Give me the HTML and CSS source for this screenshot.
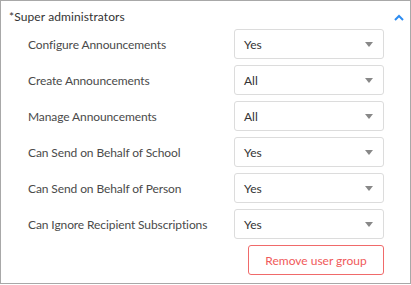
FILE: index.html
```html
<!DOCTYPE html>
<html lang="en">
<head>
    <meta charset="UTF-8">
    <title>Super administrators</title>
    <link rel="stylesheet" href="styles.css">
</head>
<body>
    <div class="panel">
        <div class="panel-header">
            <span>*Super administrators</span>
            <svg class="chevron" width="10" height="7" viewBox="0 0 10 7">
                <path d="M1 6 L5 2 L9 6" fill="none" stroke="#2d8cf0" stroke-width="2"/>
            </svg>
        </div>
        <div class="permissions">
            <label>Configure Announcements</label>
            <div class="select"><span>Yes</span><i class="caret"></i></div>

            <label>Create Announcements</label>
            <div class="select"><span>All</span><i class="caret"></i></div>

            <label>Manage Announcements</label>
            <div class="select"><span>All</span><i class="caret"></i></div>

            <label>Can Send on Behalf of School</label>
            <div class="select"><span>Yes</span><i class="caret"></i></div>

            <label>Can Send on Behalf of Person</label>
            <div class="select"><span>Yes</span><i class="caret"></i></div>

            <label>Can Ignore Recipient Subscriptions</label>
            <div class="select"><span>Yes</span><i class="caret"></i></div>
        </div>
        <div class="actions">
            <button class="remove">Remove user group</button>
        </div>
    </div>
</body>
</html>
```

FILE: styles.css
```css
body {
    margin: 0;
    font-family: Lato, "Liberation Sans", sans-serif;
    font-size: 12px;
    color: #333;
    background: #fff;
}
.panel {
    width: 411px;
    height: 284px;
    box-sizing: border-box;
    border: 1px solid #a8a8a8;
}
.panel-header {
    display: flex;
    justify-content: space-between;
    align-items: center;
    height: 28px;
    box-sizing: border-box;
    padding: 6px 6px 2px 8px;
    line-height: 18px;
    color: #333;
    letter-spacing: 0.1px;
}
.chevron {
    display: block;
}
.permissions {
    display: grid;
    grid-template-columns: 1fr 150px;
    row-gap: 6px;
    align-items: center;
    padding: 0 26px 0 27px;
}
.permissions label {
    color: #4a4a4a;
    letter-spacing: -0.1px;
}
.select {
    display: flex;
    align-items: center;
    justify-content: space-between;
    height: 30px;
    box-sizing: border-box;
    padding: 0 10px 0 9px;
    border: 1px solid #dcdcdc;
    border-radius: 3px;
    color: #333;
}
.caret {
    width: 0;
    height: 0;
    border-left: 4px solid transparent;
    border-right: 4px solid transparent;
    border-top: 5px solid #888;
}
.actions {
    display: flex;
    justify-content: flex-end;
    padding: 6px 26px 0 0;
}
.remove {
    width: 136px;
    height: 30px;
    background: #fff;
    border: 1px solid #f06a6a;
    border-radius: 3px;
    color: #f05a5a;
    font-family: Lato, "Liberation Sans", sans-serif;
    font-size: 12px;
}
```
